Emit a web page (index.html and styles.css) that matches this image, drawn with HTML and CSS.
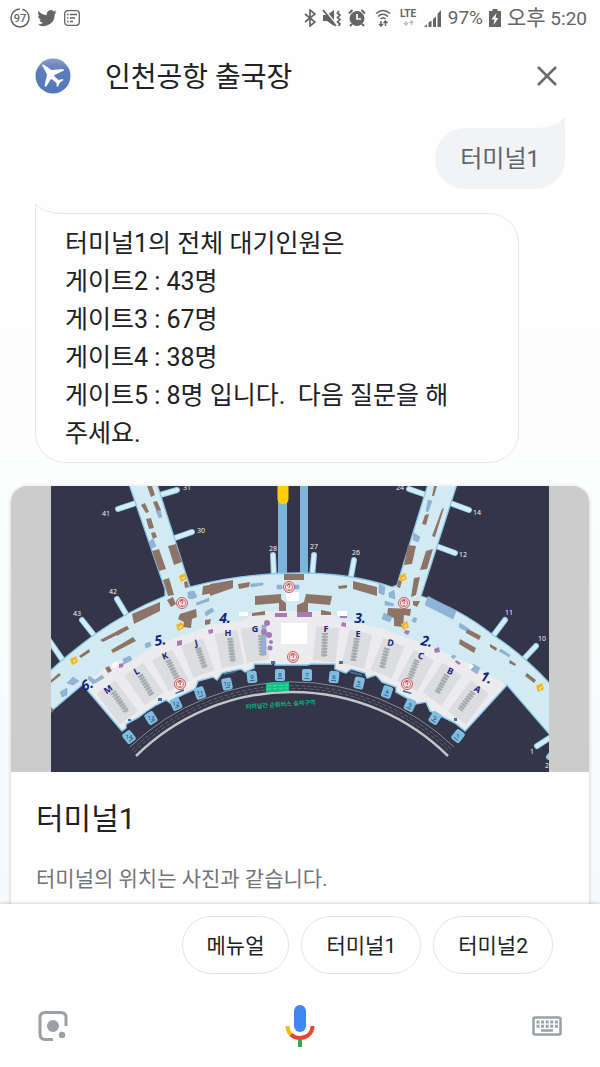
FILE: index.html
```html
<!DOCTYPE html>
<html lang="ko">
<head>
<meta charset="utf-8">
<meta name="viewport" content="width=device-width, initial-scale=1">
<title>인천공항 출국장</title>
<link rel="stylesheet" href="styles.css">
</head>
<body>
<div class="app">
  <div class="status">
    <div class="status-left">
      <svg width="20" height="20" viewBox="0 0 20 20"><circle cx="10" cy="10" r="9" fill="none" stroke="#656565" stroke-width="1.5" stroke-dasharray="54 2.5" stroke-dashoffset="12"/><text class="badge-text" x="10" y="14" text-anchor="middle">97</text></svg>
      <svg width="20" height="20" viewBox="0 0 24 24"><path fill="#656565" d="M23.6 4.9c-.8.4-1.7.6-2.7.8 1-.6 1.700-1.500 2.100-2.600-.9.5-1.900.9-3 1.100a4.800 4.800 0 0 0-8.200 4.400C7.800 8.400 4.300 6.500 2 3.600.7 5.700 1.300 8.500 3.400 10c-.8 0-1.500-.2-2.100-.6 0 2.300 1.600 4.300 3.800 4.800-.7.200-1.400.2-2.100.1.600 1.900 2.300 3.300 4.400 3.300A9.600 9.600 0 0 1 .4 19.600a13.500 13.500 0 0 0 20.800-12c1-.7 1.800-1.600 2.400-2.700z"/></svg>
      <svg width="16" height="16" viewBox="0 0 16 16" fill="none" stroke="#656565"><rect x=".7" y=".7" width="14.600" height="14.600" rx="3" stroke-width="1.300"/><path stroke-width="1.500" d="M3 4.500h1.500M6 4.500h7M3 8h1.500M6 8h5M3 11.500h1.500M6 11.500h3"/></svg>
    </div>
    <div class="status-right">
      <svg width="12" height="18" viewBox="0 0 12 18" fill="none" stroke="#656565" stroke-width="1.700"><path d="M1 5l10 8-5 4V1l5 4L1 13"/></svg>
      <svg width="20" height="18" viewBox="0 0 20 18"><path fill="#656565" d="M1 6h4l7-5v16l-7-5H1z"/><path d="M2 0l13 16" stroke="#fff" stroke-width="1.500"/><path d="M1 1l13 16" stroke="#656565" stroke-width="1.700"/><path d="M17 2l-1.500 2 2.500 2-2.500 2.500 2.500 2-2.500 2.500 2.500 2-1.500 2" fill="none" stroke="#656565" stroke-width="1.700"/></svg>
      <svg width="18" height="18" viewBox="0 0 18 18" fill="none" stroke="#656565"><circle cx="9" cy="9.500" r="7" fill="#656565"/><path stroke-width="2" d="M1 4.500L4.500 1M17 4.500L13.500 1M4 15l-2 2M14 15l2 2"/><path stroke="#fff" stroke-width="1.700" d="M9 5v5h4"/></svg>
      <svg width="20" height="18" viewBox="-3 0 20 18" fill="none" stroke="#656565" stroke-width="1.600"><path d="M1 4.500Q8 -1.500 15 4.500M3 7.500Q8 3 13 7.500M5.500 10Q8 8 10.500 10"/><path stroke-width="1.500" d="M6 12v5M4 15l2 2 2-2M10.500 17v-5M8.500 14l2-2 2 2"/></svg>
      <svg width="20" height="18" viewBox="0 0 20 18"><text class="lte" x="10" y="8" text-anchor="middle">LTE</text><path fill="none" stroke="#bbb" stroke-width="1.300" d="M8 12v4M6 14l2 2 2-2M13.500 16v-4M11.500 14l2-2 2 2"/></svg>
      <svg width="18" height="18" viewBox="0 0 18 18" fill="#656565"><path d="M0 18l3-3v3zM4.500 13.500l3-2V18h-3zM9 10l3-2.500V18H9zM13.500 5L17 1v17h-3.500z"/></svg>
      <span class="percent">97%</span>
      <svg width="12" height="18" viewBox="0 0 12 18"><path fill="#656565" d="M3.500 0h5v2H12v16H0V2h3.500z"/><path fill="#fff" d="M7.500 4L2.500 10.500h3L4.500 16l5-7h-3z"/></svg>
      <span class="clock"><span class="ampm">오후</span> 5:20</span>
    </div>
  </div>

  <header class="header">
    <svg width="36" height="36" viewBox="0 0 36 36" aria-hidden="true">
      <defs><linearGradient id="sky" x1="0" y1="0" x2="0" y2="1"><stop offset="0" stop-color="#8c9bc8"/><stop offset=".35" stop-color="#5d7cba"/><stop offset="1" stop-color="#5178bc"/></linearGradient></defs>
      <circle cx="18" cy="18" r="17.500" fill="url(#sky)"/>
      <path fill="#fff" d="M7 7q1-1 3 .5l6.500 4.500 10.500-1q2.500 0 2 1.500l-9.500 4.500-.5 1 4.500 4 4-1 1 1-3.500 2.500-2 4-1.300.2-.2-3.700-5-4-1 .5-3.500 6q-1.500 2-2.500.5l2.500-11.500z"/>
    </svg>
    <h1 class="title">인천공항 출국장</h1>
    <button class="icon-button" type="button" aria-label="닫기"><svg width="20" height="20" viewBox="0 0 20 20"><path d="M1 1l18 18M19 1L1 19" stroke="#6b6b6b" stroke-width="2.500"/></svg></button>
  </header>

  <main class="chat">
    <div class="bubble user">
      <svg class="tail" width="28" height="11" viewBox="0 0 28 11"><path fill="#f1f3f4" d="M0 11q18 0 28-11v11z"/></svg>
      터미널1
    </div>
    <div class="bubble bot">
      <svg class="tail" width="27" height="12" viewBox="0 0 27 12"><path fill="#fefefe" d="M0 0v12h27v-1Q10 11 0 0z"/><path fill="none" stroke="#e6e7ea" d="M.5 12V1Q10 10.500 27 10.500"/></svg>
      터미널1의 전체 대기인원은<br>게이트2 : 43명<br>게이트3 : 67명<br>게이트4 : 38명<br>게이트5 : 8명 입니다.&nbsp; 다음 질문을 해 주세요.
    </div>

    <article class="card">
      <svg class="map" viewBox="51 486 498 286" role="img" aria-label="터미널1 지도">
        <defs>
          <clipPath id="frame"><rect x="51" y="486" width="498" height="286"/></clipPath>
          <g id="info"><circle r="5.500" fill="#f8e9e8" stroke="#bd5c62" stroke-width="1"/><circle r="3.700" fill="#f8e9e8" stroke="#c65259" stroke-width=".8"/><path d="M-1.500-1q0-2 1.700-1.700 2 .8 0 2.200V1M0 2v1" fill="none" stroke="#b93640" stroke-width="1"/></g>
          <g id="stop"><rect x="-5" y="-6" width="10" height="12" rx="2" fill="#80bde3"/><path d="M-2.500 3.500h5" stroke="#40658c" stroke-width="1"/></g>
          <g id="pass"><path fill="#f7b51b" d="M-4-2l6-3 2 6-6 3z"/><path stroke="#fff" d="M-1 1l3-2"/></g>
        </defs>
        <g clip-path="url(#frame)">
          <rect x="51" y="486" width="498" height="286" fill="#343548"/>
          <path fill="#7cb4dc" d="M278 486h9v90h-9zM300 486h8v90h-8z"/>
          <path fill="#ffce05" d="M277.500 486h11v13q0 5-5.500 5t-5.500-5z"/>
          <g fill="none" stroke-linecap="round">
            <path stroke="#93cbec" stroke-width="6" d="M118 509l18-6M160 495l17-5M172 539l20-7M117 599l12 20M82 620l15 19M48 639l16 23M273 555l1 22M314 555l-2 22M354 560l-4 22M409 489l20 7M450 503l19 7M436 546l19 7M505 620l-15 20M536 646l-15 16M537 746l14-9M549 757l4-5"/>
            <path stroke="#d2edf6" stroke-width="4" d="M118 509l18-6M160 495l17-5M172 539l20-7M117 599l12 20M82 620l15 19M48 639l16 23M273 555l1 22M314 555l-2 22M354 560l-4 22M409 489l20 7M450 503l19 7M436 546l19 7M505 620l-15 20M536 646l-15 16M537 746l14-9"/>
          </g>
          <path fill="#d2ebf3" stroke="#8bc7ea" stroke-width="1.300" d="M49 672q18-17 45-37 34-24 71-39v-7L129 484h28l33 103q52-14 110-14 50 0 92 14l5-2 31-101h29L421 596q38 12 72 39 32 21 58 50v51L507 685Q293 600 82 685L49 713z"/>
          <path fill="#ececee" stroke="#8cccf0" stroke-width="1.500" stroke-linejoin="round" d="M83 685L122 731L126 728V724L139 717L147 711L156 705L166 700L170 703L176 698L184 694L195 689L198 681L213 677L217 680L222 673L241 669L245 672L254 668V664H271L275 662V665H307L311 664L335 664V669L346 673L351 669L365 673L367 678L376 675L382 682L396 687V692L407 698L415 704L426 702L430 711L441 716L455 723L465 731L507 685L470 684L293 648L120 684Z"/>
          <path fill="#ececee" d="M82 685L117 660l11 2 28-17 40-14 15-6 34-5 10-9h72l14 9 42 9 50 19 37 16 37 21L440 704 360 668 293 655 220 668 150 700z"/>

          <path stroke="#dcddde" stroke-width="23" d="M106 687l23 31M134 669l20 30M162 655l17 31M192 642l12 32M226 632l7 34M252 627l6 34M328 627l-4 34M361 632l-8 34M394 642l-13 32M424 655l-17 31M452 669l-20 30M480 687l-23 31"/>
          <path stroke="#b9bfc1" stroke-width="3" d="M113 692l14 20M140 675l12 20M168 660l9 18M198 648l7 20M230 638l3 24M261 635l1 21M325 633l-1 24M357 638l-4 23M387 648l-5 20M417 660l-7 18M447 675l-10 18M473 692l-13 18"/>
          <path stroke="#a3abad" stroke-width="6" stroke-dasharray="2 1" d="M113 692l14 20M140 675l12 20M168 660l9 18M198 648l7 20M230 638l3 24M261 635l1 21M325 633l-1 24M357 638l-4 23M387 648l-5 20M417 660l-7 18M447 675l-10 18M473 692l-13 18"/>

          <g fill="#8e7467">
            <path d="M147 486h5l3 9-4 2zM141 505l4-2 4 9-3 1zM153 502l4-1 4 9-4 2zM146 519l5-1 3 10-5 1zM151 533l4-1 2 5-4 2zM152 551l7-2 7 20-7 2zM168 546l8-2 6 18-8 3zM163 580l6-2 5 17-6 1zM184 582l3-1 2 6-4 1zM167 600l6-3 3 7-5 3z"/>
            <path d="M132 614l28-12v9l-26 13zM117 631l10-5 2 3-12 7zM203 586l17-3v9l-18 3zM180 614l16-5 1 8-5 2-1 9-8-1 1-5-6-3zM205 620l6-1-1 5-5 1z"/>
            <path d="M210 584l23-4v8l-23 8zM284 574h20v6h-20zM238 584l12-2-1 5-10 2zM255 596l26-2v5l5 4v8h-7v-8l-24 2zM306 594l26 2-2 9-22-2v10h-11v-8l7-3zM338 586l9-1v3l-8 1zM353 581l24 6v9l-24-7zM252 613l13-2v4l-13 1zM321 610l10 2v3h-10z"/>
            <path d="M434 486h3l-3 10h-2zM425 515l4-1-3 11-4-1zM442 509l2-1-9 29-3-1zM408 545l8 1-4 18-8 1zM426 551l7-2-6 20-7 1zM414 578l6-1-4 18-5 2zM398 580l4 1-2 7-3-1zM413 601h7l-3 6-4-2zM388 608l23 1-1 7-6-1-1 12-9-1v-8l-7-2z"/>
            <path d="M100 640l27-14 2 3-26 13zM111 650l22-13 3 4-23 12zM79 656l10-7 1 3-9 6zM51 680l8-7 2 2-10 8zM105 668l4-2 3 5-4 2zM51 707l3 3-3 3zM466 628l15 8-2 4-13-7zM460 639l16 9-2 5-15-9zM490 644l7 4-1 3-6-4zM510 660l6 4-1 2-6-3zM527 673l9 7-2 3-9-7z"/>
          </g>
          <g fill="#91b3d7" stroke="#7699bb" stroke-width=".4">
            <path d="M156 511l4-1 2 7-3 1zM149 542l4-3 3 7-5 3zM188 592l6-1 3 6-5 2-4-1zM196 603l13-5v3l-12 4zM251 584l12-1v2l-12 2zM277 585h5v4h-5zM295 585h4v4h-4zM379 584l6 3-1 8-5-2zM428 500l4 1-4 11-2-1zM414 533l6 4-2 5-5-2zM389 593l5-3 1 9-6-2zM428 596l28 15-3 8-28-14zM385 601l9 3-1 2-8-1zM460 623l9 6-3 2-7-4z"/>
            <path d="M89 676l6 4 7-5 2 3-11 6-5-5zM123 659l7-3 2 4-8 4zM67 683l6-6 6 4-6 4zM60 692l7-4v7l-5 2zM145 644l5-2 1 4-5 2zM473 664l7 4-3 6-6-4zM501 649l9 6-1 2-10-6zM453 655l3 1-2 3-3-2zM205 612l7-4 2 3-8 5zM384 613l8 4-2 5-8-3zM414 617l3 2-2 4-3-2zM262 625h4v30h-4z"/>
          </g>
          <g fill="#a67ab5"><circle cx="267" cy="623" r="3"/><circle cx="264" cy="632" r="3"/><circle cx="269" cy="635" r="3"/><circle cx="271" cy="642" r="2"/><circle cx="270" cy="648" r="2.500"/><path d="M275 613h12v4h-12zM297 612h15v5h-15zM177 641l5-1v5l-5 1zM208 630l5-1v4l-4 1zM119 664l5-1-1 4-4 1zM340 614h7v4h-7zM342 622l4 1v4l-5-1zM434 649l5-2 1 5-5 1zM456 660l5 3-2 2-4-3zM405 630l5 1-2 4-4-2z"/></g>
          <path fill="#fff" d="M281 623h26v21h-26zM286 594l3-2h10v9h-12zM239 612h9v4h-9zM337 611h10v5h-10zM112 664l5-2v5l-4 1zM471 664l3 2-3 3-2-2z"/>
          <path fill="#456e9e" d="M224 673l12-2v1l-12 3zM271 661h4v3h-4zM350 671l12 3v2l-12-3zM339 661h4v3h-4zM158 698h4v3h-4zM403 690l9 3-1 1-8-2zM128 719h3v2h-3zM454 718h3v3h-3zM175 693l9-4v2l-8 3z"/>
          <use href="#info" x="182" y="603"/><use href="#info" x="289" y="587"/><use href="#info" x="404" y="603"/><use href="#info" x="180" y="684"/><use href="#info" x="293" y="657"/><use href="#info" x="407" y="684"/>
          <use href="#pass" x="183" y="578"/><use href="#pass" x="180" y="627"/><use href="#pass" x="403" y="578"/><use href="#pass" x="405" y="626"/><use href="#pass" x="74" y="661"/><use href="#pass" x="540" y="688"/>

          <g fill="none">
            <path stroke="#8b8b90" stroke-width="1" d="M130 747A234 234 0 0 1 454 747"/>
            <path stroke="#67676f" stroke-width="1" stroke-dasharray="4 2" d="M132 750A231 231 0 0 1 452 750M134 752A228 228 0 0 1 450 752"/>
            <path stroke="#c5c4c8" stroke-width="2.500" d="M136 756A222 222 0 0 1 448 756"/>
          </g>
          <path fill="#08c987" d="M266 683l23-1v9l-23 1z"/><path stroke="#72d7b1" stroke-width=".7" stroke-dasharray="4 2" d="M267 686l21-1M267 689l21-1"/>
          <text class="route" transform="translate(246 709) rotate(-4)">터미널간 순환버스 승차구역</text>
          <use href="#stop" transform="translate(129 737) rotate(-38)"/><use href="#stop" transform="translate(151 718) rotate(-32)"/><use href="#stop" transform="translate(176 704) rotate(-25)"/><use href="#stop" transform="translate(200 693) rotate(-18)"/><use href="#stop" transform="translate(227 684) rotate(-12)"/><use href="#stop" transform="translate(252 677) rotate(-6)"/><use href="#stop" x="280" y="675"/><use href="#stop" x="307" y="675"/><use href="#stop" transform="translate(334 677) rotate(6)"/><use href="#stop" transform="translate(359 683) rotate(12)"/><use href="#stop" transform="translate(387 692) rotate(18)"/><use href="#stop" transform="translate(410 705) rotate(25)"/><use href="#stop" transform="translate(435 718) rotate(32)"/><use href="#stop" transform="translate(458 736) rotate(38)"/>
          <g class="stop-no"><text x="129" y="739">14</text><text x="151" y="720">13</text><text x="176" y="706">12</text><text x="200" y="695">11</text><text x="227" y="686">10</text><text x="252" y="679">9</text><text x="280" y="677">8</text><text x="307" y="677">7</text><text x="334" y="679">6</text><text x="359" y="685">5</text><text x="387" y="694">4</text><text x="410" y="707">3</text><text x="435" y="720">2</text><text x="458" y="738">1</text></g>
          <g class="gate"><text x="106" y="516">41</text><text x="187" y="490">31</text><text x="201" y="533">30</text><text x="113" y="594">42</text><text x="77" y="616">43</text><text x="273" y="551">28</text><text x="314" y="549">27</text><text x="356" y="555">26</text><text x="400" y="490">24</text><text x="477" y="515">14</text><text x="463" y="557">12</text><text x="509" y="615">11</text><text x="542" y="641">10</text><text x="532" y="754">1</text><text x="547" y="768">2</text></g>
          <g class="row"><text transform="translate(110 692) rotate(-35)">M</text><text transform="translate(138 674) rotate(-28)">L</text><text transform="translate(166 659) rotate(-20)">K</text><text transform="translate(197 646) rotate(-14)">J</text><text x="228" y="636">H</text><text x="255" y="632">G</text><text x="326" y="632">F</text><text x="358" y="637">E</text><text transform="translate(390 646) rotate(12)">D</text><text transform="translate(420 659) rotate(18)">C</text><text transform="translate(449 674) rotate(25)">B</text><text transform="translate(476 692) rotate(32)">A</text></g>
          <g class="exit"><text transform="translate(89 689) rotate(-25)">6.</text><text transform="translate(161 645) rotate(-10)">5.</text><text x="225" y="623">4.</text><text x="360" y="623">3.</text><text transform="translate(426 646) rotate(10)">2.</text><text transform="translate(485 682) rotate(20)">1.</text></g>
        </g>
      </svg>
      <div class="card-body">
        <h2 class="card-title">터미널1</h2>
        <p class="card-text">터미널의 위치는 사진과 같습니다.</p>
      </div>
    </article>
  </main>

  <footer class="footer">
    <div class="chips">
      <button class="chip" type="button">메뉴얼</button>
      <button class="chip" type="button">터미널1</button>
      <button class="chip" type="button">터미널2</button>
    </div>
    <nav class="tools">
      <button class="icon-button" type="button" aria-label="렌즈"><svg width="30" height="30" viewBox="0 0 30 30"><path fill="none" stroke="#9aa0a6" stroke-width="3" d="M28 15V6.500q0-5-5-5H7q-5 0-5 5v16q0 6 5 6h8"/><circle cx="15" cy="15" r="6" fill="#9aa0a6"/><circle cx="24" cy="24" r="3.200" fill="#9aa0a6"/></svg></button>
      <button class="icon-button" type="button" aria-label="음성"><svg width="30" height="42" viewBox="0 0 30 42"><rect x="9" y="0" width="12" height="27" rx="6" fill="#4285f4"/><path fill="none" stroke="#fbbc04" stroke-width="4" d="M2.500 21q0 5.500 4 9"/><path fill="none" stroke="#ea4335" stroke-width="4" d="M6 29.500q3.500 3.500 9 3.500C22 33 27.500 28 27.500 21"/><path fill="#34a853" d="M13 35h4v7h-4z"/></svg></button>
      <button class="icon-button" type="button" aria-label="키보드"><svg width="30" height="20" viewBox="0 0 30 20"><rect x="1.500" y="1.500" width="27" height="17" rx="1.500" fill="none" stroke="#9aa0a6" stroke-width="2.500"/><path stroke="#9aa0a6" stroke-width="3" stroke-dasharray="3 1.600" d="M4.500 6h21.500M4.500 10.300h21.500"/><path stroke="#9aa0a6" stroke-width="2.500" d="M9 14.500h12"/></svg></button>
    </nav>
  </footer>
</div>
</body>
</html>
```
FILE: styles.css
```css
* { box-sizing: border-box; }

body {
  margin: 0;
  background: #fefefe;
  color: #202124;
  font-family: Roboto, "Noto Sans CJK KR", sans-serif;
}

h1, h2, p { margin: 0; font-weight: 400; }
button { font: inherit; color: inherit; cursor: pointer; }
svg { display: block; flex: none; }

.app {
  display: flex;
  flex-direction: column;
  height: 100vh;
  background: linear-gradient(#fefefe 30%, #fcfdfd 45%, #f8f9fb 85%);
}

.status {
  display: flex;
  justify-content: space-between;
  align-items: center;
  height: 36px;
  padding: 0 13px 0 10px;
  color: #656565;
}
.status-left, .status-right { display: flex; align-items: center; gap: 6px; }
.status-left { gap: 7px; }
.percent, .clock { font-size: 19px; line-height: 24px; white-space: nowrap; }
.ampm { font-size: 21px; }
.badge-text { font: 500 11px Roboto, sans-serif; fill: #656565; }
.lte { font: 700 10px Roboto, sans-serif; fill: #656565; }

.header {
  display: flex;
  align-items: center;
  height: 80px;
  padding: 0 43px 0 35px;
}
.title { flex: 1; margin-left: 34px; padding-top: 4px; font-size: 28px; line-height: 40px; }
.icon-button { display: flex; padding: 0; border: 0; background: none; }

.chat {
  display: flex;
  flex: 1;
  flex-direction: column;
  min-height: 0;
  padding: 12px 11px 0;
  overflow: hidden;
}
.bubble { position: relative; flex: none; border-radius: 30px; }
.tail { position: absolute; }
.user {
  align-self: flex-end;
  margin-right: 24px;
  padding: 12px 25px 11px;
  border-top-right-radius: 0;
  background: #f1f3f4;
  color: #5f6368;
  font-size: 24px;
  line-height: 38px;
}
.user .tail { right: 0; bottom: 100%; }
.bot {
  margin: 24px 70px 0 24px;
  padding: 11px 29px 9px;
  border: 1px solid #e6e7ea;
  border-top-left-radius: 0;
  background: #fefefe;
  font-size: 25px;
  line-height: 38px;
  word-break: keep-all;
}
.bot .tail { left: -1px; top: -11px; }

.card {
  flex: none;
  margin-top: 23px;
  border-radius: 16px 16px 0 0;
  background: #fff;
  box-shadow: 0 1px 4px #0003;
  overflow: hidden;
}
.map { width: 100%; height: 286px; background: #ccc; }
.card-body { padding: 25px 25px 40px; }
.card-title { font-size: 30px; line-height: 44px; }
.card-text { margin-top: 22px; color: #70757a; font-size: 21px; line-height: 32px; }

.gate, .row, .exit, .stop-no { font-family: "Noto Sans", sans-serif; text-anchor: middle; }
.gate { fill: #f2f2f5; font-size: 7px; }
.row { fill: #22247d; font-size: 9px; font-weight: 700; }
.exit { fill: #171f78; font-size: 14px; font-style: italic; font-weight: 700; }
.stop-no { fill: #23415f; font-size: 6px; }
.route { fill: #08b77f; font: 700 6px "Noto Sans CJK KR", sans-serif; }

.footer { position: relative; background: #fff; box-shadow: 0 0 4px #0004; }
.chips {
  display: flex;
  justify-content: flex-end;
  gap: 12px;
  padding: 12px 47px 0 16px;
}
.chip {
  height: 58px;
  padding: 0 24px 2px;
  border: 1px solid #e3e4e8;
  border-radius: 29px;
  background: #fff;
  font-size: 21px;
}
.tools {
  display: flex;
  justify-content: space-between;
  align-items: center;
  padding: 31px 38px 20px;
}
```
